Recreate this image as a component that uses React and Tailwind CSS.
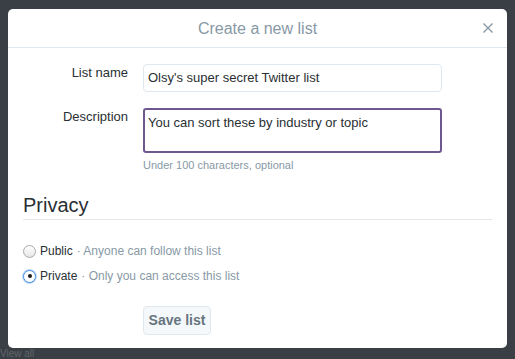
import React, { useState } from 'react';

const font = { fontFamily: '"Liberation Sans", Arial, Helvetica, sans-serif' };

const Radio = ({ checked }) => (
  checked ? (
    <span className="w-[13px] h-[13px] rounded-full border border-[#4a90e2] bg-white flex items-center justify-center shadow-[0_0_0_1px_rgba(74,144,226,0.35)]">
      <span className="w-[4px] h-[4px] rounded-full bg-[#1a1a1a]" />
    </span>
  ) : (
    <span className="w-[13px] h-[13px] rounded-full border border-[#a9a9a9] bg-gradient-to-b from-white to-[#e6e6e6]" />
  )
);

export default function App() {
  const [privacy, setPrivacy] = useState('private');

  return (
    <div className="w-[515px] h-[359px] overflow-hidden bg-[#393f45] pl-[8px] pt-[9px]" style={font}>
      <div className="w-[499px] h-[339px] rounded-[5px] bg-white flex flex-col">
        {/* header */}
        <div className="h-[39px] shrink-0 border-b border-[#e1e8ed] flex items-center relative">
          <div className="w-full text-center text-[16px] text-[#8899a6] leading-none pt-[1px]">Create a new list</div>
          <button className="absolute right-[14px] top-[14px] w-[10px] h-[10px] text-[#8899a6]">
            <svg viewBox="0 0 10 10" width="10" height="10" fill="none" stroke="currentColor" strokeWidth="1.4">
              <path d="M0.5 0.5 L9.5 9.5 M9.5 0.5 L0.5 9.5" />
            </svg>
          </button>
        </div>

        {/* form */}
        <div className="flex flex-col pt-[16px]">
          <div className="flex items-start">
            <label className="w-[120px] text-right text-[13px] leading-[18px] text-[#292f33]">List name</label>
            <div className="ml-[15px] w-[299px] h-[28px] border border-[#e1e8ed] rounded-[4px] flex items-center px-[4px] text-[13px] text-[#292f33]">
              Olsy's super secret Twitter list
            </div>
          </div>

          <div className="flex items-start mt-[16px]">
            <label className="w-[120px] text-right text-[13px] leading-[18px] text-[#292f33]">Description</label>
            <div className="ml-[15px] flex flex-col">
              <div className="w-[299px] h-[45px] border-2 border-[#6e5890] rounded-[3px] px-[3px] pt-[4px] text-[13px] leading-[18px] text-[#292f33]">
                You can sort these by industry or topic
              </div>
              <div className="mt-[4px] text-[11px] leading-[16px] text-[#8899a6]">Under 100 characters, optional</div>
            </div>
          </div>
        </div>

        {/* privacy */}
        <div className="px-[15px] flex flex-col">
          <h2 className="mt-[20px] pb-[2px] border-b border-[#e6e6e6] text-[20px] leading-[24px] text-[#292f33]">Privacy</h2>

          <div className="mt-[21px] flex flex-col gap-[5px]">
            <div className="flex items-center h-[20px] text-[12px] cursor-pointer" onClick={() => setPrivacy('public')}>
              <Radio checked={privacy === 'public'} />
              <span className="ml-[4px] text-[#292f33]">Public</span>
              <span className="ml-[4px] text-[#8899a6]">· Anyone can follow this list</span>
            </div>
            <div className="flex items-center h-[20px] text-[12px] cursor-pointer" onClick={() => setPrivacy('private')}>
              <Radio checked={privacy === 'private'} />
              <span className="ml-[4px] text-[#292f33]">Private</span>
              <span className="ml-[4px] text-[#8899a6]">· Only you can access this list</span>
            </div>
          </div>

          <div className="mt-[20px] pl-[120px]">
            <button className="h-[29px] w-[68px] rounded-[4px] border border-[#e1e8ed] bg-[#f5f8fa] text-[14px] font-bold text-[#66757f]">
              Save list
            </button>
          </div>
        </div>
      </div>
      <div className="ml-[-8px] mt-[1px] text-[10px] leading-[10px] text-[#5f666c]">View all</div>
    </div>
  );
}
